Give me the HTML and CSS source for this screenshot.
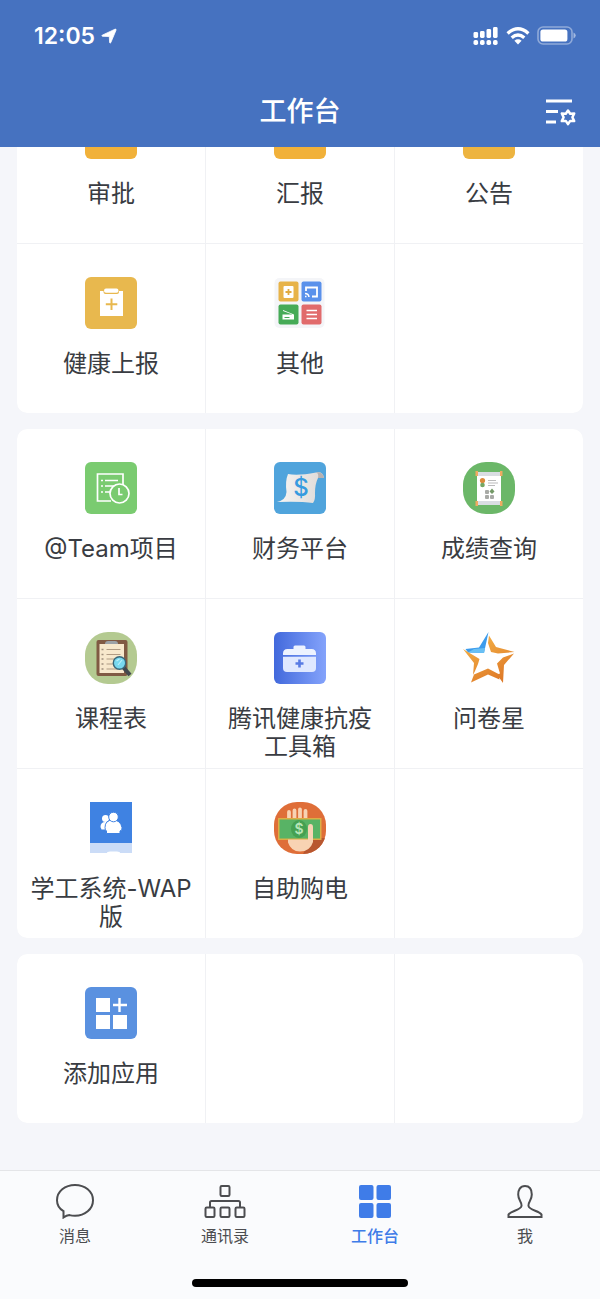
FILE: index.html
```html
<!DOCTYPE html>
<html lang="zh-CN">
<head>
<meta charset="utf-8">
<meta name="viewport" content="width=device-width, initial-scale=1">
<title>工作台</title>
<link rel="stylesheet" href="styles.css">
</head>
<body>
<div class="app">
  <header class="header">
    <div class="status">
      <span class="status-time">12:05</span>
      <svg class="status-location" viewBox="0 0 16 16" aria-hidden="true"><path d="M1.200 7.200 14 1.200q1.500-.4 1 1L9.800 14.600q-.9 1.200-1.200-.200L8.300 8.500 1.600 8.300Q.2 8 1.200 7.200z" fill="#fff" stroke="#fff" stroke-width=".8" stroke-linejoin="round"/></svg>
      <span class="status-icons">
        <svg width="26" height="20" viewBox="0 0 26 20" aria-hidden="true" fill="#fff"><rect x=".5" y="6" width="4.6" height="6" rx="1.4"/><rect x="7" y="5" width="4.6" height="7" rx="1.4"/><rect x="13.5" y="3" width="4.6" height="9" rx="1.4"/><rect x="20" y="1" width="4.6" height="11" rx="1.4"/><rect x=".5" y="14" width="4.6" height="5" rx="1.8"/><rect x="7" y="14" width="4.6" height="5" rx="1.8"/><rect x="13.5" y="14" width="4.6" height="5" rx="1.8"/><rect x="20" y="14" width="4.6" height="5" rx="1.8"/></svg>
        <svg width="24" height="20" viewBox="0 0 24 20" aria-hidden="true" fill="none" stroke="#fff" stroke-width="3.4"><path d="M1.600 7.400Q12-1.800 22.400 7.400M5.700 11.700q6.300-5.400 12.600 0"/><path d="M8.400 14.700q3.600-2.800 7.200 0L12 18.500z" fill="#fff" stroke="none"/></svg>
        <svg width="39" height="20" viewBox="0 0 39 20" aria-hidden="true"><rect x="1" y="1" width="34" height="17" rx="5" fill="none" stroke="#fff" stroke-opacity=".4" stroke-width="1.600"/><rect x="3.400" y="3.500" width="27" height="12" rx="2.600" fill="#fff"/><path d="M36.500 6.500q2.200 1 2.200 3t-2.200 3z" fill="#fff" fill-opacity=".5"/></svg>
      </span>
    </div>
    <div class="titlebar">
      <h1 class="title">工作台</h1>
      <button class="settings" type="button" aria-label="管理">
        <svg width="30" height="28" viewBox="0 0 30 28" fill="none" stroke="#fff"><path d="M0 3h26M0 13.500h12M0 24h10" stroke-width="3"/><path d="m22 12.500 2.200 3.200 4-.2-1.800 3.800 1.800 3.800-4-.2-2.200 3.200-2.200-3.200-4 .2 1.800-3.800-1.800-3.800 4 .2z" stroke-width="2.500" stroke-linejoin="round"/></svg>
      </button>
    </div>
  </header>

  <main class="content">
    <section class="card card-scrolled">
      <a class="cell" href="#"><svg class="icon" viewBox="0 0 52 52"><rect width="52" height="52" rx="6" fill="#f1b13a"/></svg><span class="label">审批</span></a>
      <a class="cell" href="#"><svg class="icon" viewBox="0 0 52 52"><rect width="52" height="52" rx="6" fill="#f1b13a"/></svg><span class="label">汇报</span></a>
      <a class="cell" href="#"><svg class="icon" viewBox="0 0 52 52"><rect width="52" height="52" rx="6" fill="#edb440"/></svg><span class="label">公告</span></a>
      <a class="cell" href="#">
        <svg class="icon" viewBox="0 0 52 52"><rect width="52" height="52" rx="6" fill="#e8b84e"/><path d="M15 14h23v25H15z" fill="#fff"/><rect x="18.500" y="11" width="15.500" height="6" rx="2" fill="#e8b84e"/><path d="M19 14q0-2.400 2-2.400h10.500q2 0 2 2.400 0 1.700-2 1.700H21q-2 0-2-1.700z" fill="#fff"/><path d="M26.500 21.500v11.500M20.800 27.200h11.500" stroke="#e8b84e" stroke-width="2"/></svg>
        <span class="label">健康上报</span>
      </a>
      <a class="cell" href="#">
        <svg class="icon" viewBox="0 0 52 52"><rect x=".5" y="1" width="50" height="50" rx="5" fill="#f4f5f8"/><rect x="4.500" y="4.500" width="20" height="20" rx="2" fill="#e7b349"/><rect x="27.500" y="4.500" width="20" height="20" rx="2" fill="#5a91eb"/><rect x="4.500" y="27.500" width="20" height="20" rx="2" fill="#46ab57"/><rect x="27.500" y="27.500" width="20" height="20" rx="2" fill="#e16b6c"/><rect x="9.500" y="9" width="10" height="12" rx="1" fill="#fff"/><path d="M14.500 12v6M11.500 15h6" stroke="#e0aa3f" stroke-width="1.800"/><path d="M32 14v-3.500h11v9h-5" fill="none" stroke="#fff" stroke-width="1.800"/><path d="M31 19.500h1.500M31 16.500q3.500 0 4 3.500" fill="none" stroke="#fff" stroke-width="1.500"/><path d="m9 33 11 4.500v5H8.500v-5h10L9 34z" fill="#fff"/><path d="M10.500 40.500h5" stroke="#46ab57"/><path d="M32.500 33.500H43M32.500 37.500H43M32.500 41.500H43" stroke="#fff" stroke-width="1.700"/></svg>
        <span class="label">其他</span>
      </a>
      <div class="cell"></div>
    </section>

    <section class="card">
      <a class="cell" href="#">
        <svg class="icon" viewBox="0 0 52 52"><rect width="52" height="52" rx="6" fill="#7acb70"/><g fill="none" stroke="#fff" stroke-width="1.700"><path d="M26 39H12.500V12H38v12"/><path d="M16 18.500h2M20 18.500h13M16 24h2M20 24h11M16 30h2M20 30h6" stroke-width="1.500"/><circle cx="34.500" cy="31.500" r="9.500" fill="#7acb70"/><path d="M34 26v6.500h3.500"/></g></svg>
        <span class="label">@Team项目</span>
      </a>
      <a class="cell" href="#">
        <svg class="icon" viewBox="0 0 52 52"><defs><linearGradient id="paper"><stop stop-color="#f7f5f3"/><stop offset="1" stop-color="#ddd9d7"/></linearGradient></defs><rect width="52" height="52" rx="6" fill="#50a4dc"/><path d="M14 12q10 2 28-1.500 7-1.500 8 5.500l-6 0q-3 6-3 15 .5 7-2 10-14-2-36-1Q12 38 12.500 30 11 19 14 12z" fill="url(#paper)"/><path d="M42 10.500q7-1 8 5.500h-6q1-5-2-5.500z" fill="#b7b2b2"/><text x="27" y="34" class="dollar" text-anchor="middle" fill="#369be0">$</text></svg>
        <span class="label">财务平台</span>
      </a>
      <a class="cell" href="#">
        <svg class="icon" viewBox="0 0 52 52"><rect width="52" height="52" rx="23" fill="#6bb768"/><path d="M14 12h24v29H14z" fill="#fff"/><path d="M14 10h24v4H14zM14 39h24v4H14z" fill="#d9dde2"/><path d="M12.500 9H15v5h-2.500zM37 9h2.500v5H37zM12.500 39H15v5h-2.500zM37 39h2.500v5H37z" fill="#efaa62"/><circle cx="19.500" cy="18.500" r="2.600" fill="#dc8b3c"/><circle cx="19.500" cy="23" r="2.300" fill="#75a764"/><path d="M25 18.500h8M25 21h10M25 23.500h7" stroke="#aaa" stroke-width=".8"/><g fill="#a8aaa6"><rect x="22" y="28" width="4" height="4" rx="1"/><rect x="22" y="33" width="4" height="4" rx="1"/><rect x="27" y="33" width="4" height="4" rx="1"/><path d="m29 26.500 2.500 3-2.500 2.500-2.500-2.500z" fill="#739966"/></g></svg>
        <span class="label">成绩查询</span>
      </a>
      <a class="cell" href="#">
        <svg class="icon" viewBox="0 0 52 52"><rect width="52" height="52" rx="23" fill="#b4ca91"/><rect x="11.500" y="8" width="31" height="36" rx="2" fill="#805a43"/><path d="M14.500 12H39v29H14.500z" fill="#f7e8cc"/><path d="M20 12q0-3 3-3h7q3 0 3 3z" fill="#9ca2a7"/><path d="M21.500 17.500h14M21.500 22.500h14M21.500 27h8M21.500 32h8M21.500 37h12" stroke="#b09b83" stroke-width="1.200"/><path d="M16.500 17.500h2M16.500 22.500h2M16.500 27h2M16.500 32h2M16.500 37h2" stroke="#a08f7d" stroke-width="1.600"/><path d="m38 35 7 8" stroke="#42484e" stroke-width="4"/><circle cx="34.500" cy="31" r="6.200" fill="#78d9ef" stroke="#396779" stroke-width="1.400"/><path d="m31.500 29 3-2M33 33l4-5" stroke="#baf1fa" stroke-width="1.200"/></svg>
        <span class="label">课程表</span>
      </a>
      <a class="cell" href="#">
        <svg class="icon" viewBox="0 0 52 52"><defs><linearGradient id="health"><stop stop-color="#4269dc"/><stop offset="1" stop-color="#84a3fb"/></linearGradient></defs><rect width="52" height="52" rx="6" fill="url(#health)"/><path d="M19.500 17v-2q0-1.500 1.500-1.500h9q1.500 0 1.500 1.500v2h6Q42 17 42 21.500V23H9v-1.500Q9 17 13.500 17z" fill="#edf3ff"/><path d="M9 24.800h33V36q0 4-4 4H13q-4 0-4-4z" fill="#dfe8ff"/><path d="M25.500 27.500v8M21.500 31.500h8" stroke="#587be4" stroke-width="2.600"/></svg>
        <span class="label">腾讯健康抗疫工具箱</span>
      </a>
      <a class="cell" href="#">
        <svg class="icon" viewBox="0 0 52 52"><defs><linearGradient id="gold" x2=".6" y2="1"><stop stop-color="#f7b94b"/><stop offset="1" stop-color="#df7b28"/></linearGradient></defs><path d="M25.500 0 21 21 5 20.500 2.500 17 16 15.500z" fill="#3c9cec"/><path d="m5 20.500 6-3.500 11-1L21 21z" fill="#69c0f4"/><path d="M26 3.500 33 15l18.500 5L35 21.500l-7-1.500-3-9zM0 17l16.500 10L15 32l-3 7-2 4 1-12zM51 21.500 41 33l-1 18-6-8.500 3-1-3-10 6-6zM8 50.500l3-8 14-6 10.500 5.500 1 5.500L25 42.500z" fill="url(#gold)"/></svg>
        <span class="label">问卷星</span>
      </a>
      <a class="cell" href="#">
        <svg class="icon" viewBox="0 0 52 52"><path d="M5 0h42v41H5z" fill="#3f82e2"/><path d="M5 41h42v10H5z" fill="#cbdcf7"/><path d="M22 51q0-1.500 3-1.500h7q3 0 3 1.500z" fill="#fff"/><circle cx="20.500" cy="16.500" r="3.500" fill="#fff"/><path d="M15.500 25q0-5 5-5 4 0 4 5l-3 2.500h-5z" fill="#fff"/><g fill="#fff" stroke="#3f82e2"><path d="M20 25.500q0-7.500 8-7.500 7.500 0 9 7.500.5 3-2 3.500v2.500H21.500V29q-1.500-.5-1.500-3.500z"/><circle cx="28.500" cy="15" r="4.800"/></g></svg>
        <span class="label">学工系统-WAP版</span>
      </a>
      <a class="cell" href="#">
        <svg class="icon" viewBox="0 0 52 52"><defs><clipPath id="badge"><rect width="52" height="52" rx="23"/></clipPath></defs><g clip-path="url(#badge)"><path d="M0 0h52v52H0z" fill="#df6e38"/><path d="M38 36h14v16H29z" fill="#b85730"/><path d="M15 18v-8M20.500 18V8.500M26 18V7.500M31.500 18V9" stroke="#f8d3b3" stroke-width="3.800" stroke-linecap="round"/><path d="M4 16h43.500v22H4z" fill="#ddad45"/><path d="M5.500 17.500H46v19H5.500z" fill="#58b365"/><ellipse cx="25" cy="27" rx="8" ry="9" fill="#45a052"/><text x="25" y="32" class="note" text-anchor="middle" fill="#b5e5b8">$</text><path d="M14 37.500h20V25q0-3 2.500-3t2.500 3v15q-3 9.500-13 9.500-9 0-12-9z" fill="#f8d3b3"/></g></svg>
        <span class="label">自助购电</span>
      </a>
      <div class="cell"></div>
    </section>

    <section class="card">
      <a class="cell" href="#">
        <svg class="icon" viewBox="0 0 52 52"><rect width="52" height="52" rx="6" fill="#5a91e0"/><path d="M11 11h14v14H11zM11 28h14v14H11zM28 28h14v14H28z" fill="#fff"/><path d="M34.500 11v14M28 18h14" stroke="#fff" stroke-width="2.400"/></svg>
        <span class="label">添加应用</span>
      </a>
      <div class="cell"></div>
      <div class="cell"></div>
    </section>
  </main>

  <footer class="footer">
    <nav class="tabs">
      <a class="tab" href="#"><svg class="tab-icon" viewBox="0 0 44 36"><path d="M10.500 34.500v-6.300Q4 24.500 4 17.300C4 8.500 12 2 22 2s18 6.500 18 15.300S32 32.800 22 32.800q-3 0-5.500-.7-3 .3-6 2.400z"/></svg>消息</a>
      <a class="tab" href="#"><svg class="tab-icon" viewBox="0 0 44 36"><rect x="17.500" y="3" width="9" height="10" rx="1.200"/><rect x="2.500" y="24.500" width="9" height="9.500" rx="1.200"/><rect x="17.500" y="24.500" width="9" height="9.500" rx="1.200"/><rect x="32.500" y="24.500" width="9" height="9.500" rx="1.200"/><path d="M7 24v-4.500q0-1.500 1.500-1.500h27q1.500 0 1.500 1.500V24"/></svg>通讯录</a>
      <a class="tab tab-active" href="#" aria-current="page"><svg class="tab-icon tab-icon-solid" viewBox="0 0 44 36"><rect x="6" y="2" width="14.500" height="15" rx="2"/><rect x="23.500" y="2" width="14.500" height="15" rx="2"/><rect x="6" y="20" width="14.500" height="15" rx="2"/><rect x="23.500" y="20" width="14.500" height="15" rx="2"/></svg>工作台</a>
      <a class="tab" href="#"><svg class="tab-icon" viewBox="0 0 44 36"><path d="M22 3c-5 0-6.800 4-6.800 8.500 0 6 3.800 7 3.300 11.500-.5 4-11 5-13 8.500V34h33v-2.500c-2-3.500-12.500-4.500-13-8.500-.5-4.500 3.300-5.500 3.300-11.500C28.800 7 27 3 22 3z"/></svg>我</a>
    </nav>
    <div class="home-indicator"></div>
  </footer>
</div>
</body>
</html>
```
FILE: styles.css
```css
* {
  box-sizing: border-box;
}

body {
  margin: 0;
  background: #f5f6fa;
  color: #393c42;
  font-family: Inter, "Noto Sans CJK SC", sans-serif;
}

a {
  color: inherit;
  text-decoration: none;
}

svg {
  display: block;
}

.app {
  display: flex;
  flex-direction: column;
  height: 100vh;
}

.header {
  z-index: 1;
  flex: none;
  padding: 20px 24px 15px 34px;
  background: #4672c0;
  color: #fff;
}

.status {
  display: flex;
  align-items: center;
  gap: 6px;
  height: 32px;
}

.status-time {
  font-size: 23px;
  font-weight: 600;
  line-height: 32px;
}

.status-location {
  width: 16px;
  height: 16px;
}

.status-icons {
  display: flex;
  gap: 7px;
  margin-left: auto;
}

.titlebar {
  display: grid;
  grid-template-columns: 1fr auto 1fr;
  align-items: center;
  margin: 40px 0 0 -10px;
}

.title {
  grid-column: 2;
  margin: 0;
  font-size: 27px;
  font-weight: 500;
  line-height: 40px;
}

.settings {
  justify-self: end;
  padding: 0;
  border: 0;
  background: none;
}

.content {
  display: flex;
  flex: 1;
  flex-direction: column;
  gap: 16px;
  min-height: 0;
  padding: 0 17px;
  overflow: hidden;
}

.card {
  display: grid;
  flex: none;
  grid-template-columns: repeat(3, 1fr);
  gap: 1px;
  border-radius: 10px;
  background: #f0f1f4;
  overflow: hidden;
}

.card-scrolled {
  margin-top: -73px;
}

.cell {
  display: flex;
  flex-direction: column;
  align-items: center;
  gap: 21px;
  min-height: 169px;
  padding: 33px 12px 0;
  background: #fff;
}

.icon {
  width: 52px;
  height: 52px;
}

.label {
  font-size: 24px;
  line-height: 28px;
  text-align: center;
}

.dollar {
  font-size: 24px;
  font-weight: 500;
}

.note {
  font-size: 14px;
  font-weight: 600;
}

.footer {
  flex: none;
  padding: 12px 0;
  border-top: 1px solid #e4e5e8;
  background: #fafbfd;
}

.tabs {
  display: grid;
  grid-template-columns: repeat(4, 1fr);
}

.tab {
  display: flex;
  flex-direction: column;
  align-items: center;
  gap: 5px;
  color: #4c4d50;
  font-size: 16px;
  line-height: 24px;
}

.tab-active {
  color: #3f7ce8;
  font-weight: 500;
}

.tab-icon {
  width: 44px;
  height: 36px;
  fill: none;
  stroke: currentColor;
  stroke-width: 2;
}

.tab-icon-solid {
  fill: currentColor;
  stroke: none;
}

.home-indicator {
  width: 36%;
  height: 8px;
  margin: 31px auto 0;
  border-radius: 4px;
  background: #000;
}
```
